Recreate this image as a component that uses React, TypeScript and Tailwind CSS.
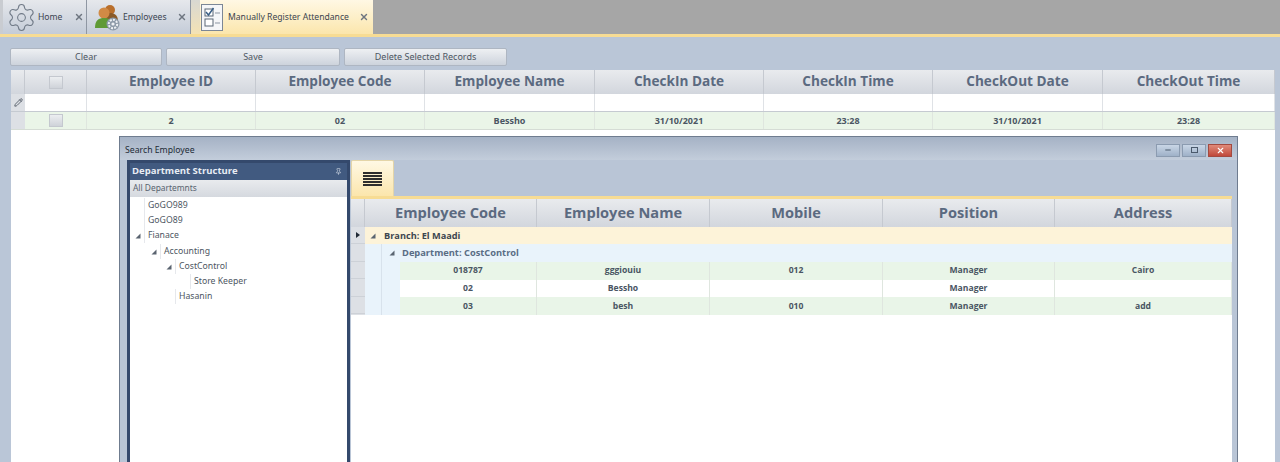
import { Settings, X, Minus, Pin, Pencil } from "lucide-react";

const tahoma = "font-['Noto_Sans',sans-serif]";
const head = "font-['Open_Sans',sans-serif] font-bold text-[#5b6a80]";

const mainCols = [
  "Employee ID",
  "Employee Code",
  "Employee Name",
  "CheckIn Date",
  "CheckIn Time",
  "CheckOut Date",
  "CheckOut Time",
];
const mainRow = ["2", "02", "Bessho", "31/10/2021", "23:28", "31/10/2021", "23:28"];
const mainGrid = "grid grid-cols-[14px_62px_169px_169px_170px_169px_169px_170px_172px]";

const searchCols = ["Employee Code", "Employee Name", "Mobile", "Position", "Address"];
const searchRows = [
  ["018787", "gggiouiu", "012", "Manager", "Cairo"],
  ["02", "Bessho", "", "Manager", ""],
  ["03", "besh", "010", "Manager", "add"],
];
const searchGrid = "grid grid-cols-[172px_173px_173px_172px_177px]";

const tree = [
  { label: "GoGO989", x: 147, arrow: false },
  { label: "GoGO89", x: 147, arrow: false },
  { label: "Fianace", x: 147, arrow: true },
  { label: "Accounting", x: 163, arrow: true },
  { label: "CostControl", x: 178, arrow: true },
  { label: "Store Keeper", x: 193, arrow: false },
  { label: "Hasanin", x: 178, arrow: false },
];

function CheckBox() {
  return <div className="w-[14px] h-[13px] border border-[#c4c8cf] bg-gradient-to-b from-[#eceef1] to-[#cfd3d9]" />;
}

function Tri({ className = "" }: { className?: string }) {
  return (
    <svg width="6" height="6" viewBox="0 0 6 6" className={className}>
      <path d="M5.5 .5V5.5H.5Z" fill="#5a6470" />
    </svg>
  );
}

function PeopleIcon() {
  return (
    <svg width="26" height="27" viewBox="0 0 26 27">
      <circle cx="15" cy="6" r="5" fill="#b96f2c" />
      <path d="M8 17c0-6 3-8 7-8s8 2 8 8z" fill="#8a5a28" />
      <circle cx="9" cy="9" r="5.5" fill="#d18a45" />
      <path d="M0 24c0-8 4-10 9-10s9 2 9 10z" fill="#5f9a35" />
      <circle cx="18" cy="20" r="6.5" fill="#8d9aa8" />
      <circle cx="18" cy="20" r="4.2" fill="none" stroke="#eef1f4" strokeWidth="2" strokeDasharray="2 1.2" />
      <circle cx="18" cy="20" r="1.6" fill="#eef1f4" />
    </svg>
  );
}

function ChecklistIcon() {
  return (
    <svg width="22" height="27" viewBox="0 0 22 27">
      <rect x=".5" y=".5" width="21" height="26" fill="#f5f6f8" stroke="#7c8796" />
      <rect x="4" y="5" width="8" height="7" fill="#fff" stroke="#5b6675" />
      <path d="M5 8l2.5 3 5-7" fill="none" stroke="#3a5f86" strokeWidth="1.5" />
      <rect x="4" y="15" width="8" height="7" fill="#fff" stroke="#5b6675" />
      <path d="M14 9h5M14 19h5" stroke="#8b95a2" />
    </svg>
  );
}

function TabClose({ className = "" }: { className?: string }) {
  return <X size={10} strokeWidth={3.4} className={`text-[#6e7680] ${className}`} />;
}

function TabBar() {
  return (
    <div className={`h-[37px] shrink-0 flex items-stretch bg-[#a6a6a6] border-b-[3px] border-[#f7dc94] ${tahoma} text-[8.6px] text-[#3b4450]`}>
      <div className="w-[3px] bg-[#c9ccd1]" />
      <div className="w-[84px] flex items-center bg-gradient-to-b from-[#e6e8ec] to-[#c4ccd8] border-r border-[#8f97a3]">
        <Settings size={31} strokeWidth={0.8} className="ml-[3px] text-[#6f7986]" />
        <span className="ml-[1px]">Home</span>
        <TabClose className="ml-[12px]" />
      </div>
      <div className="w-[104px] flex items-center bg-gradient-to-b from-[#e6e8ec] to-[#c4ccd8] border-r border-[#8f97a3]">
        <div className="ml-[8px]"><PeopleIcon /></div>
        <span className="ml-[2px]">Employees</span>
        <TabClose className="ml-[10px]" />
      </div>
      <div className="w-[9px] bg-gradient-to-b from-[#d8d8d2] to-[#f4e2b4]" />
      <div className="w-[173px] flex items-center bg-gradient-to-b from-[#fff8e4] to-[#fbe6ac]">
        <div className="ml-[1px]"><ChecklistIcon /></div>
        <span className="ml-[5px] whitespace-nowrap">Manually Register Attendance</span>
        <TabClose className="ml-[10px]" />
      </div>
    </div>
  );
}

function ActionButton({ label, className }: { label: string; className: string }) {
  return (
    <button className={`h-[18px] border border-[#aeb6c2] rounded-[2px] bg-gradient-to-b from-[#eef0f3] to-[#cdd3dc] text-[9px] text-[#4d5662] ${tahoma} ${className}`}>
      {label}
    </button>
  );
}

function MainGrid() {
  return (
    <div className="ml-[11px] mr-[5px] mt-[4px] flex-1 bg-white">
      <div className={`${mainGrid} h-[24px] bg-gradient-to-b from-[#e9ebee] to-[#d2d6dd]`}>
        <div className="border-r border-[#c5c9d0]" />
        <div className="flex items-center justify-center border-r border-[#c5c9d0]"><CheckBox /></div>
        {mainCols.map((c) => (
          <div key={c} className={`flex items-center justify-center border-r border-[#c5c9d0] pb-[2px] text-[13.6px] ${head}`}>{c}</div>
        ))}
      </div>
      <div className={`${mainGrid} h-[18px] border-b border-[#c5cad1]`}>
        <div className="flex items-center justify-center bg-[#dde0e5]"><Pencil size={9} strokeWidth={2} className="text-[#3b4450]" /></div>
        {Array.from({ length: 8 }).map((_, i) => <div key={i} className="border-r border-[#dfe2e6]" />)}
      </div>
      <div className={`${mainGrid} h-[18px] bg-[#eaf5e8] border-b border-[#d5dcd5]`}>
        <div className="bg-[#dde0e5]" />
        <div className="flex items-center justify-center border-r border-[#dfe6df]"><CheckBox /></div>
        {mainRow.map((v, i) => (
          <div key={i} className="flex items-center justify-center border-r border-[#dfe6df] text-[9px] font-bold text-[#4a5563] font-['Open_Sans',sans-serif]">{v}</div>
        ))}
      </div>
    </div>
  );
}

function DepartmentPanel() {
  return (
    <div className="w-[223px] shrink-0 border-[3px] border-[#34496c] border-b-0 bg-white flex flex-col">
      <div className="h-[17px] bg-[#415a80] flex items-center justify-between pl-[2px] pr-[5px]">
        <span className="font-['Open_Sans',sans-serif] font-bold text-[9.5px] text-[#e8edf4]">Department Structure</span>
        <Pin size={7} className="text-[#dfe5ee]" />
      </div>
      <div className={`h-[17px] flex items-center pl-[3px] bg-gradient-to-b from-[#e9ebee] to-[#d5d9df] text-[8.4px] text-[#59636f] ${tahoma}`}>All Departemnts</div>
      <div className={`pt-[1px] ${tahoma} text-[8.7px] text-[#4d5662]`}>
        {tree.map((t) => (
          <div key={t.label} className="h-[15.2px] flex items-center">
            <span style={{ marginLeft: t.x - 133 }} className="relative leading-[15px] border-l border-[#e6e8ec] pl-[3px]">
              {t.arrow && <Tri className="absolute left-[-10px] top-[5px]" />}
              {t.label}
            </span>
          </div>
        ))}
      </div>
    </div>
  );
}

function SearchGrid() {
  return (
    <div className="flex-1 bg-white flex flex-col min-h-0">
      <div className="h-[28px] flex bg-gradient-to-b from-[#e9ebee] to-[#d2d6dd]">
        <div className="w-[14px] border-r border-[#c5c9d0]" />
        <div className={`flex-1 ${searchGrid}`}>
          {searchCols.map((c) => (
            <div key={c} className={`flex items-center justify-center border-r border-[#c5c9d0] text-[14.6px] ${head}`}>{c}</div>
          ))}
        </div>
      </div>
      <div className="flex">
        <div className="w-[14px] shrink-0 bg-[#dde0e5] flex flex-col">
          <div className="h-[17px] flex items-center justify-center border-b border-[#cdd1d7]">
            <div className="w-0 h-0 border-y-[3px] border-y-transparent border-l-[4px] border-l-[#222b36]" />
          </div>
          {[0, 1, 2, 3].map((i) => <div key={i} className="h-[17.5px] border-b border-[#cdd1d7]" />)}
        </div>
        <div className="flex-1 font-['Open_Sans',sans-serif]">
          <div className="h-[17px] bg-[#fdf3d9] flex items-center pl-[5px] gap-[8px] text-[9.2px] font-bold text-[#3d4650]">
            <Tri />
            <span>Branch: El Maadi</span>
          </div>
          <div className="flex">
            <div className="w-[17px] shrink-0 bg-[#e9f3fb] border-r border-[#d8e2ec]" />
            <div className="flex-1">
              <div className="h-[18px] bg-[#e9f3fb] flex items-center pl-[7px] gap-[7px] text-[9.3px] font-bold text-[#5a6d85]">
                <Tri />
                <span>Department: CostControl</span>
              </div>
              <div className="flex">
                <div className="w-[18px] shrink-0 bg-[#e9f3fb]" />
                <div className="flex-1">
                  {searchRows.map((r, i) => (
                    <div key={r[0]} className={`h-[17.6px] grid grid-cols-[137px_173px_173px_172px_177px] ${i === 1 ? "bg-white" : "bg-[#e9f5e8]"}`}>
                      {r.map((v, j) => (
                        <div key={j} className="flex items-center justify-center border-r border-[#dfe6df] text-[8.6px] font-bold text-[#4a5563]">{v}</div>
                      ))}
                    </div>
                  ))}
                </div>
              </div>
            </div>
          </div>
        </div>
      </div>
    </div>
  );
}

function SearchDialog() {
  return (
    <div className="absolute left-[119px] top-[136px] w-[1119px] h-[326px] border border-[#6f7c8f] border-b-0 bg-[#b9c5d6] flex flex-col">
      <div className="h-[23px] shrink-0 flex items-center justify-between pl-[5px] pr-[5px] bg-gradient-to-b from-[#a5b2c5] to-[#c3cddb]">
        <span className={`text-[8.7px] text-[#222b36] ${tahoma} mt-[5px]`}>Search Employee</span>
        <div className="flex gap-[2px] mt-[3px]">
          <div className="w-[24px] h-[13px] border border-[#8b9bb0] bg-gradient-to-b from-[#c9d6e6] to-[#9fb1c8] flex items-center justify-center"><Minus size={8} strokeWidth={3} className="text-[#4b5a6c]" /></div>
          <div className="w-[24px] h-[13px] border border-[#8b9bb0] bg-gradient-to-b from-[#c9d6e6] to-[#9fb1c8] flex items-center justify-center"><div className="w-[7px] h-[6px] border border-[#4b5a6c]" /></div>
          <div className="w-[24px] h-[13px] border border-[#a34a40] bg-gradient-to-b from-[#e08a7a] to-[#c0483a] flex items-center justify-center"><X size={9} strokeWidth={3} className="text-white" /></div>
        </div>
      </div>
      <div className="flex-1 min-h-0 flex pl-[7px] pr-[5px]">
        <DepartmentPanel />
        <div className="flex-1 flex flex-col ml-[1px] min-w-0">
          <div className="h-[39px] shrink-0 border-b-[3px] border-[#f7dc94]">
            <div className="w-[43px] h-[36px] rounded-t-[2px] bg-gradient-to-b from-[#fff8e4] to-[#fbe6ac] border border-b-0 border-[#e4d5a8] flex flex-col items-center justify-center gap-[1px]">
              {[0, 1, 2, 3, 4].map((i) => <div key={i} className="w-[19px] h-[2px] bg-[#2e2e2e]" />)}
            </div>
          </div>
          <SearchGrid />
        </div>
      </div>
    </div>
  );
}

export default function App() {
  return (
    <div className="relative w-[1280px] h-[462px] overflow-hidden bg-[#bac6d7] flex flex-col">
      <TabBar />
      <div className="flex gap-[4px] pl-[10px] pt-[11px] shrink-0">
        <ActionButton label="Clear" className="w-[152px]" />
        <ActionButton label="Save" className="w-[174px]" />
        <ActionButton label="Delete Selected Records" className="w-[163px]" />
      </div>
      <MainGrid />
      <SearchDialog />
    </div>
  );
}
